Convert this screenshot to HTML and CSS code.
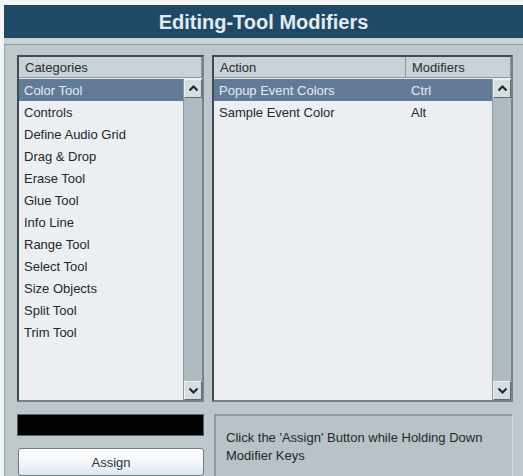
FILE: index.html
```html
<!DOCTYPE html>
<html lang="en">
<head>
    <meta charset="UTF-8">
    <meta name="viewport" content="width=device-width, initial-scale=1.0">
    <title>Editing-Tool Modifiers</title>
    <link rel="stylesheet" href="styles.css">
</head>
<body>
    <div class="window">
        <!-- 标题栏 -->
        <div class="titlebar">Editing-Tool Modifiers</div>
        <div class="band"></div>
        <div class="panel">
            <!-- 左边：分类列表 -->
            <div class="col">
                <div class="list">
                    <div class="head">
                        <div class="cell">Categories</div>
                    </div>
                    <div class="body">
                        <ul class="rows">
                            <li class="on">Color Tool</li>
                            <li>Controls</li>
                            <li>Define Audio Grid</li>
                            <li>Drag &amp; Drop</li>
                            <li>Erase Tool</li>
                            <li>Glue Tool</li>
                            <li>Info Line</li>
                            <li>Range Tool</li>
                            <li>Select Tool</li>
                            <li>Size Objects</li>
                            <li>Split Tool</li>
                            <li>Trim Tool</li>
                        </ul>
                        <div class="scroll">
                            <div class="btn"><svg width="11" height="7" viewBox="0 0 11 7"><polyline points="1.5,5.5 5.5,1.5 9.5,5.5" fill="none" stroke="#1c252b" stroke-width="2"/></svg></div>
                            <div class="track"></div>
                            <div class="btn"><svg width="11" height="7" viewBox="0 0 11 7"><polyline points="1.5,1.5 5.5,5.5 9.5,1.5" fill="none" stroke="#1c252b" stroke-width="2"/></svg></div>
                        </div>
                    </div>
                </div>
                <div class="keys"></div>
                <button class="assign">Assign</button>
            </div>
            <!-- 右边：动作和修饰键 -->
            <div class="col">
                <div class="list">
                    <div class="head">
                        <div class="cell action">Action</div>
                        <div class="cell mods">Modifiers</div>
                    </div>
                    <div class="body">
                        <ul class="rows">
                            <li class="on"><span class="action">Popup Event Colors</span><span>Ctrl</span></li>
                            <li><span class="action">Sample Event Color</span><span>Alt</span></li>
                        </ul>
                        <div class="scroll">
                            <div class="btn"><svg width="11" height="7" viewBox="0 0 11 7"><polyline points="1.5,5.5 5.5,1.5 9.5,5.5" fill="none" stroke="#1c252b" stroke-width="2"/></svg></div>
                            <div class="track"></div>
                            <div class="btn"><svg width="11" height="7" viewBox="0 0 11 7"><polyline points="1.5,1.5 5.5,5.5 9.5,1.5" fill="none" stroke="#1c252b" stroke-width="2"/></svg></div>
                        </div>
                    </div>
                </div>
                <div class="hint">Click the 'Assign' Button while Holding Down<br>Modifier Keys</div>
            </div>
        </div>
    </div>
</body>
</html>
```
FILE: styles.css
```css
*{
    margin: 0;
    padding: 0;
    list-style: none;
    box-sizing: border-box;
}
body{
    background: #f3f5f6;
    font-family: "Liberation Sans", Arial, sans-serif;
    font-size: 13px;
    color: #22282c;
    overflow: hidden;
}
.window{
    margin: 5px 0 0 4px;
    height: 471px;
    display: flex;
    flex-direction: column;
    background: #bec8cc;
}
.titlebar{
    height: 33px;
    background: #1f4965;
    color: #e2ebf0;
    font-size: 20px;
    font-weight: bold;
    text-align: center;
    line-height: 34px;
}
.band{
    height: 9px;
    background: #c9d2d6;
    border-bottom: 1px solid #8e9aa0;
}
.panel{
    flex: 1;
    display: grid;
    grid-template-columns: 187px 301px;
    gap: 8px;
    padding: 10px 0 0 12px;
    border-left: 1px solid #9aa5aa;
}
.col{
    display: flex;
    flex-direction: column;
}
.list{
    height: 347px;
    display: flex;
    flex-direction: column;
    background: #eceff2;
    border: 2px solid #3d4b54;
    border-right-color: #75838b;
    border-bottom-color: #75838b;
}
.head{
    height: 21px;
    display: flex;
    background: #c9d2d6;
    border-bottom: 1px solid #8a979d;
}
.cell{
    flex: 1;
    padding: 3px 0 0 6px;
    color: #262d31;
    border-right: 1px solid #8a979d;
}
.cell.action{
    flex: none;
    width: 192px;
}
.body{
    flex: 1;
    display: flex;
    padding-top: 1px;
}
.rows{
    flex: 1;
}
.rows li{
    height: 22px;
    line-height: 23px;
    padding-left: 5px;
    display: flex;
}
.rows li.on{
    background: #617b98;
    color: #e4ecf3;
}
.rows .action{
    width: 192px;
}
.scroll{
    width: 19px;
    display: flex;
    flex-direction: column;
    background: #b0bbc1;
    border-left: 1px solid #8c999f;
}
.btn{
    height: 19px;
    display: flex;
    align-items: center;
    justify-content: center;
    background: #d5dde1;
    border: 1px solid #5d6b73;
    border-top-color: #eef2f4;
    border-left-color: #eef2f4;
}
.track{
    flex: 1;
}
.keys{
    height: 22px;
    margin-top: 12px;
    background: #020202;
    border: 1px solid #55636b;
}
.assign{
    height: 28px;
    margin-top: 12px;
    margin-left: 1px;
    font-family: "Liberation Sans", Arial, sans-serif;
    font-size: 13px;
    color: #2d3438;
    background: linear-gradient(#ffffff, #f1f4f8 60%, #dfe6ee);
    border: 1px solid #6f7d86;
    border-radius: 3px;
}
.hint{
    flex: 1;
    margin-top: 12px;
    margin-left: 2px;
    padding: 13px 0 0 10px;
    line-height: 18px;
    color: #23292d;
    background: #b8c2c7;
    border-top: 2px solid #8d9aa0;
    border-left: 2px solid #8d9aa0;
    border-right: 1px solid #d2d9dc;
}
```
